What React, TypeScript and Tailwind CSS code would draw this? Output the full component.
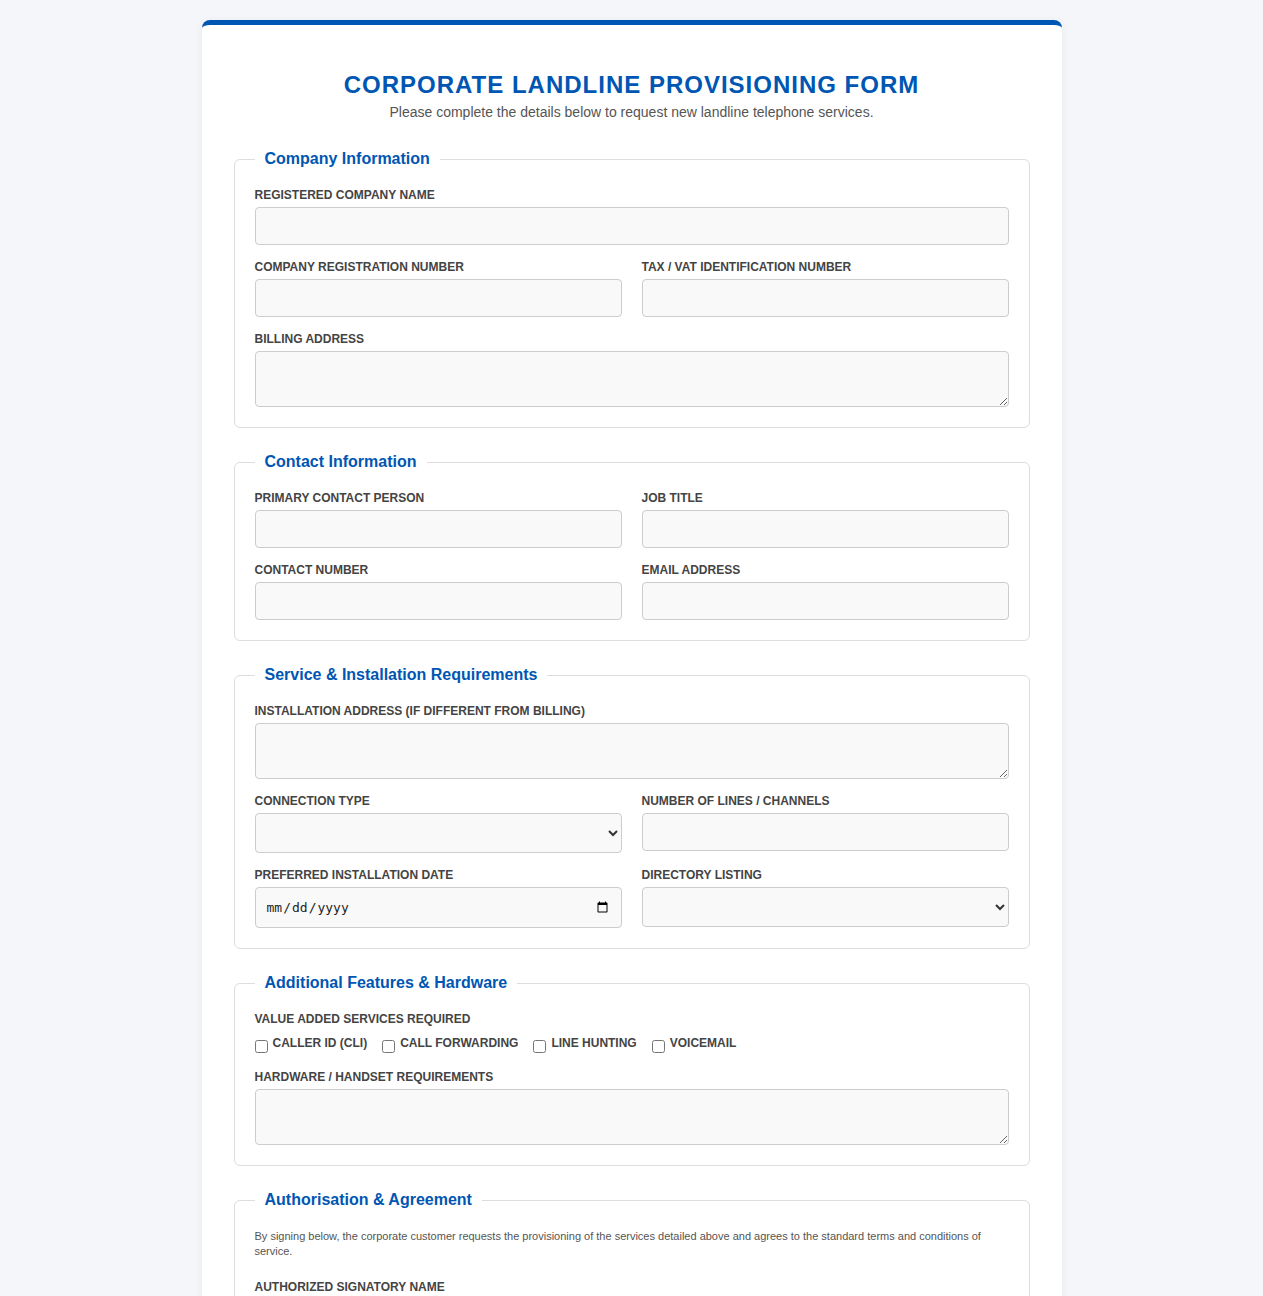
import React from 'react'

const inputCls =
  'block w-full h-[38px] px-[10px] bg-[#f9f9f9] border border-[#ccc] rounded-[4px] text-[14px] text-[#333] outline-none'
const areaCls =
  'block w-full h-[56px] px-[10px] py-[8px] bg-[#f9f9f9] border border-[#ccc] rounded-[4px] text-[14px] text-[#333] outline-none'
const selectCls =
  'block w-full h-[40px] px-[10px] bg-[#f9f9f9] border border-[#ccc] rounded-[4px] text-[14px] text-[#333] outline-none'
const dateCls =
  "block w-full h-[41px] px-[10px] bg-[#f9f9f9] border border-[#ccc] rounded-[4px] text-[13px] text-[#222] font-['DejaVu_Sans_Mono',monospace] outline-none"

const Label = ({ children }: { children: React.ReactNode }) => (
  <label className="block mb-[5px] text-[12px] leading-[14px] font-bold uppercase text-[#444]">
    {children}
  </label>
)

const Field = ({ label, children }: { label: string; children: React.ReactNode }) => (
  <div>
    <Label>{label}</Label>
    {children}
  </div>
)

const Section = ({ title, children }: { title: string; children: React.ReactNode }) => (
  <fieldset className="border border-[#ddd] rounded-[6px] px-5 pt-[17px] pb-5 mb-[22px]">
    <legend className="px-[10px] text-[16px] font-bold text-[#0056b3]">{title}</legend>
    <div className="flex flex-col gap-[15px]">{children}</div>
  </fieldset>
)

const Row = ({ children }: { children: React.ReactNode }) => (
  <div className="grid grid-cols-2 gap-x-[20px]">{children}</div>
)

const services = ['Caller ID (CLI)', 'Call Forwarding', 'Line Hunting', 'Voicemail']

export default function App() {
  return (
    <div className="min-h-screen bg-[#f4f6f9] pt-[20px] pb-[40px] font-['Liberation_Sans',Arial,sans-serif]">
      <div className="max-w-[860px] mx-auto bg-white rounded-[8px] border-t-[5px] border-[#0056b3] shadow-[0_2px_10px_rgba(0,0,0,0.06)] px-[32px] pt-[46px] pb-[40px]">
        <div className="text-center mb-[27px]">
          <h1 className="text-[24px] leading-[28px] font-bold uppercase tracking-[1px] text-[#0056b3]">
            Corporate Landline Provisioning Form
          </h1>
          <p className="mt-[5px] text-[14px] leading-[16px] text-[#555]">
            Please complete the details below to request new landline telephone services.
          </p>
        </div>

        <form>
          <Section title="Company Information">
            <Field label="Registered Company Name">
              <input type="text" className={inputCls} />
            </Field>
            <Row>
              <Field label="Company Registration Number">
                <input type="text" className={inputCls} />
              </Field>
              <Field label="Tax / VAT Identification Number">
                <input type="text" className={inputCls} />
              </Field>
            </Row>
            <Field label="Billing Address">
              <textarea className={areaCls} />
            </Field>
          </Section>

          <Section title="Contact Information">
            <Row>
              <Field label="Primary Contact Person">
                <input type="text" className={inputCls} />
              </Field>
              <Field label="Job Title">
                <input type="text" className={inputCls} />
              </Field>
            </Row>
            <Row>
              <Field label="Contact Number">
                <input type="tel" className={inputCls} />
              </Field>
              <Field label="Email Address">
                <input type="email" className={inputCls} />
              </Field>
            </Row>
          </Section>

          <Section title="Service & Installation Requirements">
            <Field label="Installation Address (if different from billing)">
              <textarea className={areaCls} />
            </Field>
            <Row>
              <Field label="Connection Type">
                <select className={selectCls} defaultValue="">
                  <option value=""></option>
                  <option>Analogue PSTN</option>
                  <option>ISDN BRI</option>
                  <option>ISDN PRI</option>
                  <option>SIP Trunk</option>
                </select>
              </Field>
              <Field label="Number of Lines / Channels">
                <input type="number" className={inputCls} />
              </Field>
            </Row>
            <Row>
              <Field label="Preferred Installation Date">
                <input type="date" className={dateCls} />
              </Field>
              <Field label="Directory Listing">
                <select className={selectCls} defaultValue="">
                  <option value=""></option>
                  <option>Listed</option>
                  <option>Unlisted</option>
                </select>
              </Field>
            </Row>
          </Section>

          <Section title="Additional Features & Hardware">
            <div>
              <label className="block text-[12px] leading-[14px] font-bold uppercase text-[#444]">
                Value Added Services Required
              </label>
              <div className="flex items-start gap-[15px] mt-[10px] h-[19px]">
                {services.map((s) => (
                  <label
                    key={s}
                    className="flex items-start gap-[5px] text-[12px] leading-[14px] font-bold uppercase text-[#444]"
                  >
                    <input type="checkbox" className="w-[13px] h-[13px] mt-[4px]" />
                    {s}
                  </label>
                ))}
              </div>
            </div>
            <Field label="Hardware / Handset Requirements">
              <textarea className={areaCls} />
            </Field>
          </Section>

          <Section title="Authorisation & Agreement">
            <p className="text-[11px] leading-[15px] text-[#555] mb-[6px]">
              By signing below, the corporate customer requests the provisioning of the services
              detailed above and agrees to the standard terms and conditions of service.
            </p>
            <Field label="Authorized Signatory Name">
              <input type="text" className={inputCls} />
            </Field>
            <Row>
              <Field label="Designation">
                <input type="text" className={inputCls} />
              </Field>
              <Field label="Date">
                <input type="date" className={dateCls} />
              </Field>
            </Row>
            <Field label="Signature">
              <textarea className={areaCls} />
            </Field>
          </Section>

          <div className="text-center">
            <button
              type="submit"
              className="bg-[#0056b3] text-white text-[15px] font-bold uppercase tracking-[1px] px-[30px] py-[12px] rounded-[4px]"
            >
              Submit Request
            </button>
          </div>
        </form>
      </div>
    </div>
  )
}
